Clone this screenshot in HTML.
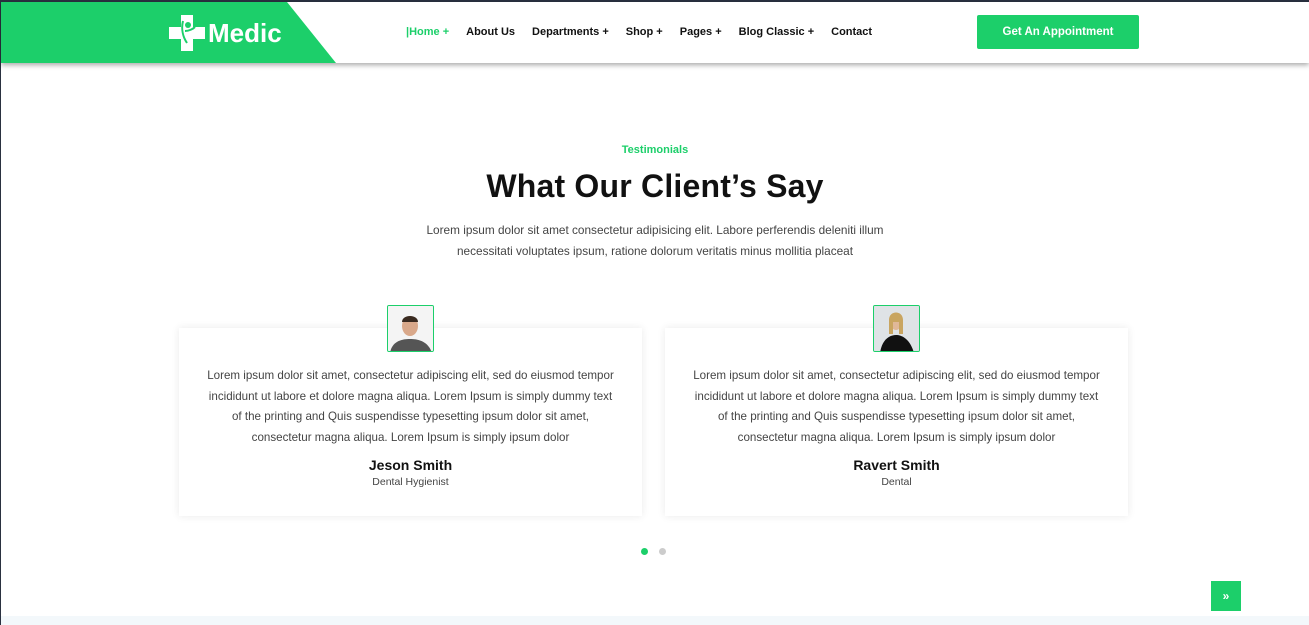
<!DOCTYPE html>
<html><head><meta charset="utf-8"><style>
*{margin:0;padding:0;box-sizing:border-box}
body{width:1309px;height:623px;overflow:hidden;background:#2a3140;font-family:"Liberation Sans",sans-serif;position:relative}
.page{position:absolute;left:1px;top:2px;right:0;bottom:0;background:#fff}
.hdr{position:absolute;left:0;top:0;width:1308px;height:61px;background:#fff;box-shadow:0 2px 5px rgba(0,0,0,.35);z-index:2}
.green{position:absolute;left:0;top:0;width:335px;height:61px;background:#1ccf6a;clip-path:polygon(0 0,286px 0,335px 61px,0 61px)}
.logo{position:absolute;left:168px;top:13px;display:flex;align-items:center;color:#fff;font-weight:bold;font-size:26px}
nav{position:absolute;left:405px;top:24px;font-size:11px;font-weight:bold;color:#111;display:flex;gap:0}
nav span{margin-right:17px}
.btn{position:absolute;left:976px;top:13px;width:162px;height:34px;background:#1ccf6a;color:#fff;font-size:11.5px;font-weight:bold;text-align:center;line-height:34px;border-radius:2px}
.c{position:absolute;left:0;width:1308px;text-align:center}
.card{position:absolute;top:326px;width:463px;height:188px;background:#fff;box-shadow:0 0 8px rgba(0,0,0,.09);text-align:center}
.card p{font-size:11.6px;line-height:20.5px;color:#444;margin:38px 0 0;white-space:nowrap}
.card h4{font-size:14px;color:#111;margin-top:9px}
.card small{display:block;font-size:10.5px;color:#444;margin-top:3px}
.av{position:absolute;top:303px;width:47px;height:47px;border:1px solid #1ccf6a;border-radius:2px;background:#eee;overflow:hidden;z-index:1}
</style></head><body><div class="page">
<div class="hdr"><div class="green"></div>
<div class="logo"><svg width="36" height="36" viewBox="0 0 36 36"><path d="M12 0h12v12h12v12H24v12H12V24H0V12h12z" fill="#fff"/><circle cx="19" cy="10" r="3" fill="#1ccf6a"/><path d="M14 6c-2 8 0 16 4 22M16 16c4 0 8-2 10-4" stroke="#1ccf6a" stroke-width="2" fill="none"/></svg><span style="margin-left:3px">Medic</span></div>
<nav><span style="color:#1ccf6a">|Home +</span><span>About Us</span><span>Departments +</span><span>Shop +</span><span>Pages +</span><span>Blog Classic +</span><span>Contact</span></nav>
<div class="btn">Get An Appointment</div></div>
<div class="c" style="top:142px;font-size:11px;color:#1ccf6a;font-weight:bold">Testimonials</div>
<div class="c" style="top:166px;font-size:32px;font-weight:bold;color:#111;letter-spacing:0.2px">What Our Client’s Say</div>
<div class="c" style="top:218px;font-size:11.8px;line-height:20.5px;color:#444">Lorem ipsum dolor sit amet consectetur adipisicing elit. Labore perferendis deleniti illum<br>necessitati voluptates ipsum, ratione dolorum veritatis minus mollitia placeat</div>
<div class="av" style="left:386px"><svg width="47" height="47"><rect width="47" height="47" fill="#f4f4f4"/><ellipse cx="22" cy="20" rx="8" ry="10" fill="#d9a88a"/><path d="M14 16c0-8 16-8 16 0" fill="#3a2a20"/><path d="M2 47c2-12 12-14 20-14s18 2 22 14z" fill="#555"/></svg></div>
<div class="av" style="left:872px"><svg width="47" height="47"><rect width="47" height="47" fill="#dfe3e6"/><ellipse cx="22" cy="16" rx="6" ry="8" fill="#e0b898"/><path d="M15 14c0-10 14-10 14 0v14h-4V16h-6v12h-4z" fill="#c9a560"/><path d="M6 47c2-14 10-18 16-18s14 4 18 18z" fill="#111"/></svg></div>
<div class="card" style="left:178px"><p>Lorem ipsum dolor sit amet, consectetur adipiscing elit, sed do eiusmod tempor<br>incididunt ut labore et dolore magna aliqua. Lorem Ipsum is simply dummy text<br>of the printing and Quis suspendisse typesetting ipsum dolor sit amet,<br>consectetur magna aliqua. Lorem Ipsum is simply ipsum dolor</p><h4>Jeson Smith</h4><small>Dental Hygienist</small></div>
<div class="card" style="left:664px"><p>Lorem ipsum dolor sit amet, consectetur adipiscing elit, sed do eiusmod tempor<br>incididunt ut labore et dolore magna aliqua. Lorem Ipsum is simply dummy text<br>of the printing and Quis suspendisse typesetting ipsum dolor sit amet,<br>consectetur magna aliqua. Lorem Ipsum is simply ipsum dolor</p><h4>Ravert Smith</h4><small>Dental</small></div>
<div style="position:absolute;left:640px;top:546px;width:7px;height:7px;border-radius:50%;background:#1ccf6a"></div>
<div style="position:absolute;left:658px;top:546px;width:7px;height:7px;border-radius:50%;background:#ccc"></div>
<div style="position:absolute;left:0;top:614px;width:1308px;height:9px;background:#f3f8fb"></div>
<div style="position:absolute;left:1210px;top:579px;width:30px;height:30px;background:#1ccf6a;color:#fff;font-size:12px;text-align:center;line-height:30px;font-weight:bold">»</div>
</div></body></html>
